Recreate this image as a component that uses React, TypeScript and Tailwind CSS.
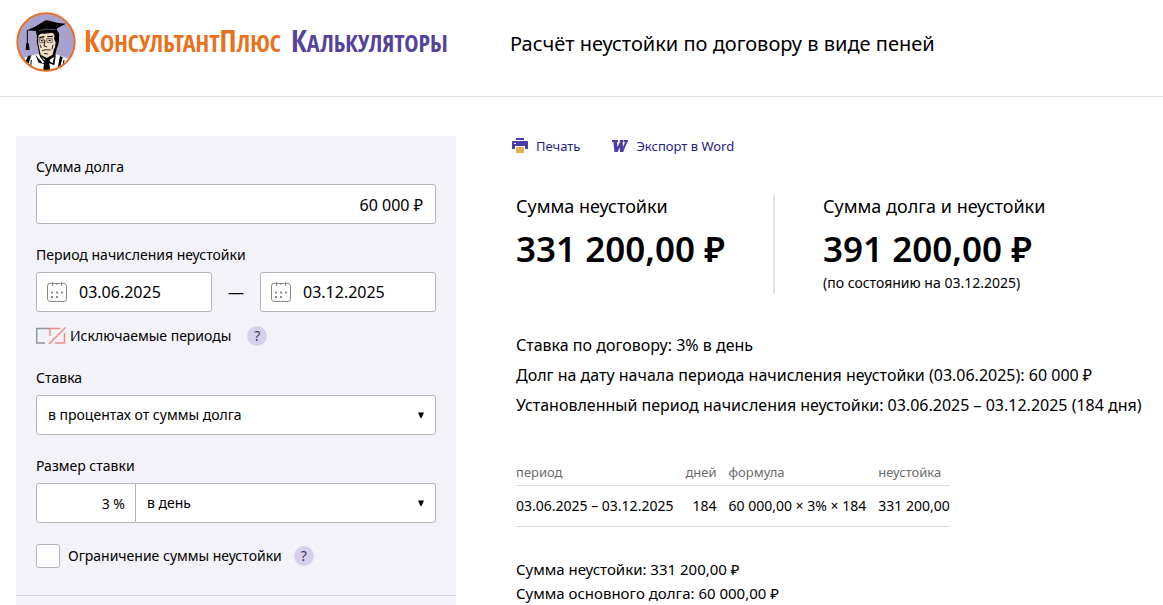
import React, { useState } from "react";

function Logo() {
  return (
    <svg className="size-[60px] shrink-0" viewBox="18 12 180 180" aria-hidden="true">
      <defs>
        <clipPath id="badge">
          <circle cx="108" cy="102" r="86" />
        </clipPath>
      </defs>
      <circle cx="108" cy="102" r="87" fill="#a9a2cf" />
      <g clipPath="url(#badge)">
        <path d="M20 160 L46 148 L84 138 L136 138 L176 152 L176 200 L30 200Z" fill="#fff" />
        <path d="M82 76 L136 62 Q150 72 147 88 Q148 108 140 122 L134 148 L110 158 L88 142 L84 118 Q78 100 82 76Z" fill="#000" />
        <path d="M86 82 Q92 74 104 77 L128 74 Q136 80 132 92 L137 104 Q136 116 131 126 L128 140 L110 150 L92 140 L88 122 Q82 100 86 82Z" fill="#f0dfc2" />
        <path d="M88 89 L103 86 M112 86 L128 85" stroke="#000" strokeWidth="4" />
        <path d="M105 96 L102 114 L111 117 M96 128 Q108 123 122 126 M102 136 L113 138 M129 110 L126 124 M90 110 L94 120" stroke="#000" strokeWidth="2.5" fill="none" />
        <path d="M87 93 h15 v11 h-13z M110 92 h17 v11 h-16z" fill="none" stroke="#000" strokeWidth="1.5" />
        <path d="M93 98 h5 M116 97 h6" stroke="#000" strokeWidth="4" />
        <path d="M54 144 L64 142 L56 166 L44 166Z M150 144 L141 190 L147 190 L158 148Z M44 150 L34 164 L40 168Z" fill="#000" />
        <path d="M76 140 L90 156 L90 140 L102 156 L118 152 L128 158 L138 138 L133 172 L118 166 L122 198 L98 198 L102 168 L86 164Z" fill="#000" />
        <path d="M90 146 L103 163 L98 166 L84 148Z M120 155 L131 148 L128 166 L119 160Z" fill="#fff" />
        <path d="M64 156 L60 192 M162 156 L156 190" stroke="#000" strokeWidth="3" />
        <path d="M76 60 L80 82 Q104 66 140 76 L140 56Z" fill="#000" />
        <path d="M48 68 Q80 56 104 38 Q110 35 118 38 Q142 46 168 47 Q152 54 138 63 Q112 58 78 69 Q62 66 48 68Z" fill="#000" />
        <path d="M52 68 V110" stroke="#000" strokeWidth="3" />
        <path d="M49 106 H56 L59 126 H47Z" fill="#000" />
        <path d="M86 68 Q112 60 137 65" stroke="#a9a2cf" strokeWidth="1.5" fill="none" />
      </g>
      <circle cx="108" cy="102" r="86" fill="none" stroke="#e8712a" strokeWidth="6" />
    </svg>
  );
}

function CalendarIcon() {
  return (
    <svg className="size-5 shrink-0" viewBox="0 0 20 20" fill="none" stroke="#8b8b8b" aria-hidden="true">
      <rect x="0.5" y="1.5" width="19" height="18" rx="2.5" />
      <path d="M5.5 0V4M10 1V3M14.5 0V4" />
      <path d="M9 10.5h2M14 10.5h2M4 10.5h2M4 15h2M9 15h2" strokeWidth="2" />
    </svg>
  );
}

function PrintIcon() {
  return (
    <svg className="h-4 w-4" viewBox="0 0 16 16" aria-hidden="true">
      <path d="M4 0H12V2H4Z" fill="#4a3fa8" />
      <path d="M1 3H15Q16 3 16 4V11H13V8H3V11H0V4Q0 3 1 3Z" fill="#4a3fa8" />
      <rect x="2" y="5" width="2" height="1" fill="#fff" />
      <rect x="4" y="9" width="8" height="6" rx="0.5" fill="#e6ae4c" />
    </svg>
  );
}

function WordIcon() {
  return (
    <svg className="h-4 w-4" viewBox="0 0 16 16" aria-hidden="true">
      <path d="M0 2H6V4H5L5.4 9L8 4L7.6 2H11.5V4H10.7L11 9L13 4H12V2H16V4H15.2L11.2 14H8L7.8 9.5L5.6 14H2.4L1.4 4H0Z" fill="#4a3fa8" />
    </svg>
  );
}

function ExcludedIcon() {
  return (
    <svg className="h-[18px] w-[30px]" viewBox="0 0 30 18" fill="none" strokeWidth="1.5" aria-hidden="true">
      <path d="M14 1.5H0.75V16H9" stroke="#8d96a3" />
      <path d="M14 9V1.5H24M28.5 6V16H19M13 17L29.5 0.5" stroke="#ee8b8b" />
    </svg>
  );
}

function Help({ label }: { label: string }) {
  return (
    <button type="button" aria-label={label} className="size-5 shrink-0 rounded-full bg-[#d6d0ec] text-center text-sm leading-5 text-[#3f3a55]">
      ?
    </button>
  );
}

function DateField({ label, value, onChange }: { label: string, value: string, onChange: (value: string) => void }) {
  return (
    <label className="flex h-10 w-44 items-center gap-3 rounded-[3px] border border-[#b5b5b9] bg-white px-2.5">
      <CalendarIcon />
      <input
        aria-label={label}
        value={value}
        onChange={(e) => onChange(e.target.value)}
        className="w-full min-w-0 bg-transparent text-base outline-none"
      />
    </label>
  );
}

function Arrow() {
  return (
    <svg className="pointer-events-none absolute top-[17px] right-3 size-1.5" viewBox="0 0 6 6" aria-hidden="true">
      <path d="M0 0.5H6L3.5 6H2.5Z" fill="#000" />
    </svg>
  );
}

export default function App() {
  const [amount, setAmount] = useState('60 000 ₽')
  const [from, setFrom] = useState('03.06.2025')
  const [to, setTo] = useState('03.12.2025')
  const [rate, setRate] = useState('3 %')
  const [limited, setLimited] = useState(false)

  return (
    <div className="bg-white font-['Noto_Sans','Open_Sans',sans-serif] text-black">
      <header className="grid grid-cols-[440px_minmax(0,1fr)] items-center gap-x-[54px] border-b border-[#dfdfe2] px-4 pt-3 pb-6">
        <a href="#" className="flex items-center gap-2 whitespace-nowrap font-['Noto_Sans_ExtraCondensed','Open_Sans_Condensed','Roboto_Condensed',sans-serif] leading-8 font-medium uppercase">
          <Logo />
          <span className="flex items-baseline gap-2.5 text-2xl leading-8">
            <span className="text-[#e8711c]"><span className="text-3xl leading-8">К</span>онсультант<span className="text-3xl leading-8">П</span>люс</span>
            <span className="font-semibold text-[#54439a]"><span className="text-3xl leading-8">К</span>алькуляторы</span>
          </span>
        </a>
        <h1 className="pt-1 text-xl leading-7">Расчёт неустойки по договору в виде пеней</h1>
      </header>

      <div className="grid grid-cols-[440px_minmax(0,1fr)] gap-x-14 px-4 pt-[39px]">
        <form className="flex flex-col gap-[21px] rounded-t-[3px] bg-[#f3f2f9] pt-[21px] text-sm leading-5">
          <div className="flex flex-col gap-[7px] px-5">
            <label htmlFor="amount">Сумма долга</label>
            <input
              id="amount"
              value={amount}
              onChange={(e) => setAmount(e.target.value)}
              className="h-10 rounded-[3px] border border-[#b5b5b9] bg-white px-3 pt-0.5 text-right text-base outline-none"
            />
          </div>

          <fieldset className="px-5">
            <legend className="mb-[7px]">Период начисления неустойки</legend>
            <div className="flex items-center justify-between">
              <DateField label="Начало периода" value={from} onChange={setFrom} />
              <span className="text-base">—</span>
              <DateField label="Конец периода" value={to} onChange={setTo} />
            </div>
            <div className="mt-3.5 flex h-[21px] items-start">
              <button type="button" className="flex items-center gap-1">
                <ExcludedIcon />
                Исключаемые периоды
              </button>
              <span className="ml-4 flex"><Help label="Об исключаемых периодах" /></span>
            </div>
          </fieldset>

          <div className="flex flex-col gap-[7px] px-5">
            <label htmlFor="rateType">Ставка</label>
            <div className="relative">
              <select id="rateType" className="h-10 w-full appearance-none rounded-[3px] border border-[#b5b5b9] bg-white px-[11px] outline-none">
                <option>в процентах от суммы долга</option>
              </select>
              <Arrow />
            </div>
          </div>

          <div className="flex flex-col gap-[7px] px-5">
            <label htmlFor="rate">Размер ставки</label>
            <div className="flex">
              <input
                id="rate"
                value={rate}
                onChange={(e) => setRate(e.target.value)}
                className="h-10 w-[100px] rounded-l-[3px] border border-[#b5b5b9] bg-white px-2.5 text-right outline-none"
              />
              <div className="relative flex-1">
                <select aria-label="Период ставки" className="h-10 w-full appearance-none rounded-r-[3px] border border-l-0 border-[#b5b5b9] bg-white px-[11px] outline-none">
                  <option>в день</option>
                </select>
                <Arrow />
              </div>
            </div>
          </div>

          <div className="flex items-center gap-2 px-5">
            <input
              id="limit"
              type="checkbox"
              checked={limited}
              onChange={(e) => setLimited(e.target.checked)}
              className="size-6 appearance-none rounded-[3px] border border-[#b5b5b9] bg-white checked:bg-[#54439a]"
            />
            <label htmlFor="limit" className="pr-1">Ограничение суммы неустойки</label>
            <Help label="Об ограничении суммы" />
          </div>

          <div className="mt-1.5 border-t border-[#d5d4dc] pb-2.5"></div>
        </form>

        <main>
          <div className="flex gap-8 text-[13px] leading-5 text-[#241c80]">
            <button type="button" className="flex items-center gap-2">
              <PrintIcon />
              Печать
            </button>
            <button type="button" className="flex items-center gap-2">
              <WordIcon />
              Экспорт в Word
            </button>
          </div>

          <div className="px-1">
            <div className="mt-[39px] flex">
              <section className="w-[259px] border-r-2 border-[#e2e2e5]">
                <h2 className="text-lg leading-[22px]">Сумма неустойки</h2>
                <p className="mt-[9px] text-[35px] leading-[46px] font-semibold">331 200,00 ₽</p>
              </section>
              <section className="pl-12">
                <h2 className="text-lg leading-[22px]">Сумма долга и неустойки</h2>
                <p className="mt-[9px] text-[35px] leading-[46px] font-semibold">391 200,00 ₽</p>
                <p className="text-sm leading-[22px]">(по состоянию на 03.12.2025)</p>
              </section>
            </div>

            <div className="mt-9 text-base leading-[30px]">
              <p>Ставка по договору: 3% в день</p>
              <p>Долг на дату начала периода начисления неустойки (03.06.2025): 60 000 ₽</p>
              <p>Установленный период начисления неустойки: 03.06.2025 – 03.12.2025 (184 дня)</p>
            </div>

            <table className="mt-[42px] text-left whitespace-nowrap">
              <thead className="text-[13px] leading-5 text-[#6b6b6b]">
                <tr className="border-b border-[#dcdcdf]">
                  <th className="pb-[3px] font-normal">период</th>
                  <th className="pb-[3px] pl-3 text-right font-normal">дней</th>
                  <th className="pb-[3px] pl-3 font-normal">формула</th>
                  <th className="pb-[3px] pl-3 font-normal">неустойка</th>
                </tr>
              </thead>
              <tbody className="text-sm leading-10">
                <tr className="border-b border-[#dcdcdf]">
                  <td>03.06.2025 – 03.12.2025</td>
                  <td className="pl-3 text-right">184</td>
                  <td className="pl-3">60 000,00 × 3% × 184</td>
                  <td className="pl-3">331 200,00</td>
                </tr>
              </tbody>
            </table>

            <div className="mt-[30px] text-[15px] leading-6">
              <p>Сумма неустойки: 331 200,00 ₽</p>
              <p>Сумма основного долга: 60 000,00 ₽</p>
            </div>
          </div>
        </main>
      </div>
    </div>
  );
}
